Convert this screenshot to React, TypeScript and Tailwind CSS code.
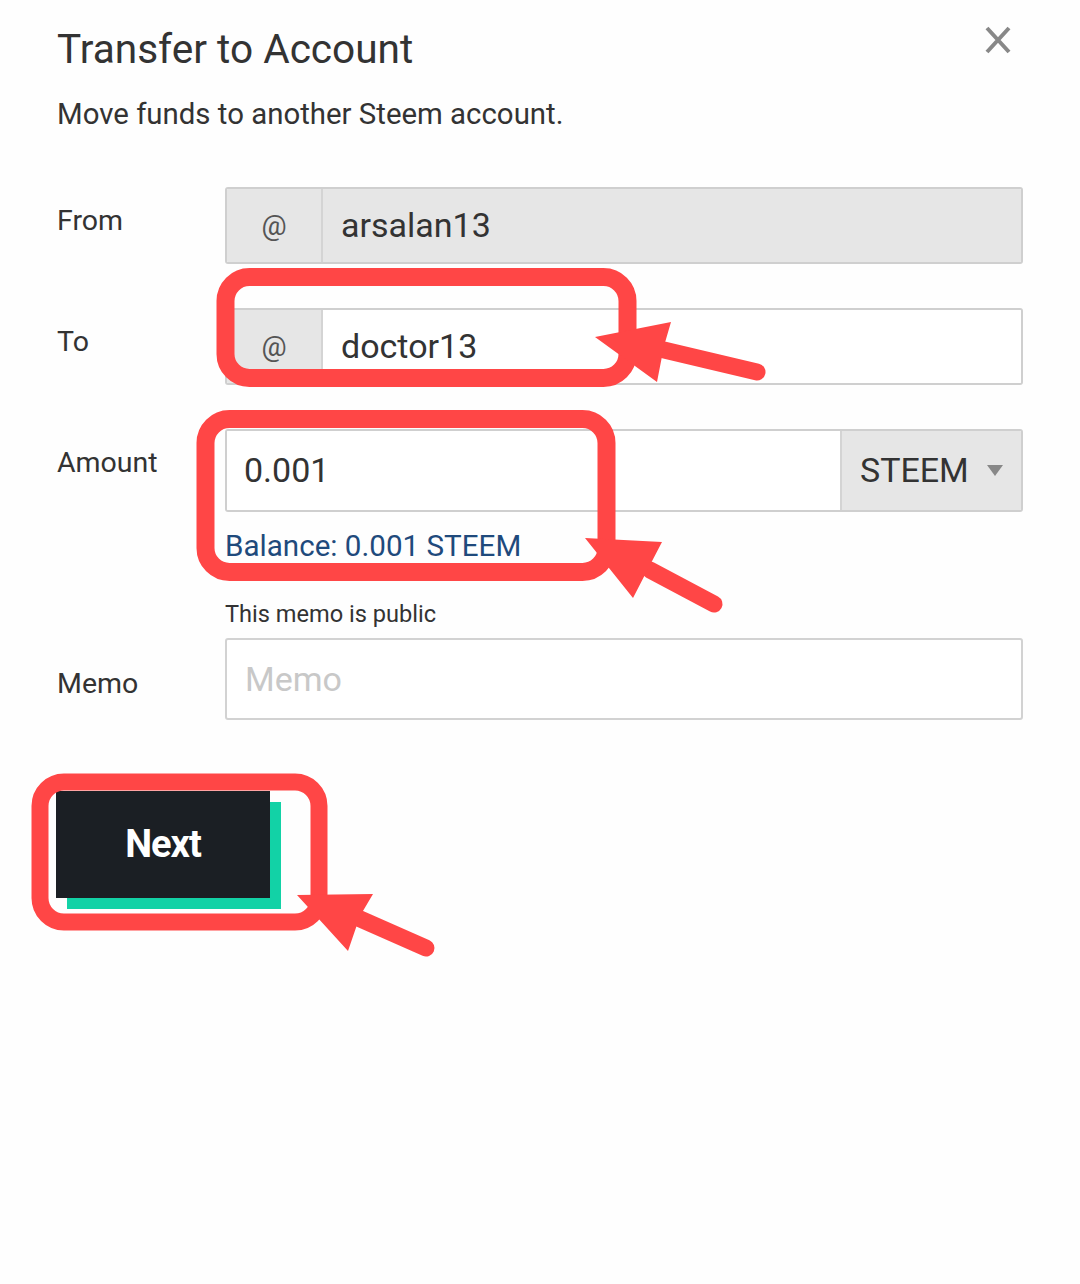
import React from 'react';

const RED = '#ff4646';

// Hand-drawn red callouts sitting on top of the form
const Callouts: React.FC = () => (
  <svg
    className="pointer-events-none absolute left-0 top-0"
    width={1080}
    height={1284}
    viewBox="0 0 1080 1284"
    fill="none"
  >
    <rect x={225.5} y={277} width={402} height={101} rx={24} stroke={RED} strokeWidth={18} />
    <line x1={664} y1={350} x2={757} y2={372} stroke={RED} strokeWidth={17} strokeLinecap="round" />
    <polygon points="595,337 671,322 664,346 657,382" fill={RED} />

    <rect x={205.5} y={419} width={401} height={153} rx={24} stroke={RED} strokeWidth={18} />
    <line x1={650} y1={570} x2={714} y2={604} stroke={RED} strokeWidth={17} strokeLinecap="round" />
    <polygon points="585,538 662,542 650,565 633,598" fill={RED} />

    <rect x={40} y={782} width={279} height={140} rx={24} stroke={RED} strokeWidth={17} />
    <line x1={358} y1={918} x2={426} y2={948} stroke={RED} strokeWidth={17} strokeLinecap="round" />
    <polygon points="297,895 373,894 360,916 348,951" fill={RED} />
  </svg>
);

const Label: React.FC<{ children: React.ReactNode; className?: string }> = ({ children, className }) => (
  <div className={`w-[168px] shrink-0 text-[28.5px] leading-[34px] text-[#333] ${className ?? ''}`}>{children}</div>
);

const AccountInput: React.FC<{ value: string; disabled?: boolean }> = ({ value, disabled }) => (
  <div className="flex h-[77px] flex-1 overflow-hidden rounded-[3px] border-2 border-[#cfcfcf]">
    <div className="flex w-[96px] shrink-0 items-center justify-center border-r-2 border-[#d4d4d4] bg-[#e6e6e6] text-[28px] text-[#555]">
      @
    </div>
    <div
      className={`flex flex-1 items-center pl-[18px] text-[34px] text-[#333] ${disabled ? 'bg-[#e6e6e6]' : 'bg-white'}`}
    >
      {value}
    </div>
  </div>
);

export default function App() {
  return (
    <div className="relative h-[1284px] w-[1080px] overflow-hidden bg-[#fefefe] font-['Roboto',sans-serif]">
      <div className="px-[57px] pt-[25px]">
        <div className="flex items-start justify-between">
          <h1 className="text-[40.6px] leading-[48px] font-normal text-[#333]">Transfer to Account</h1>
          <button className="mr-[12px] mt-[1px] text-[#888]" aria-label="Close">
            <svg width={26} height={28} viewBox="0 0 26 28">
              <path d="M2 2 L24 26 M24 2 L2 26" stroke="currentColor" strokeWidth={4} />
            </svg>
          </button>
        </div>
        <p className="mt-[23px] text-[29.4px] leading-[36px] text-[#333]">Move funds to another Steem account.</p>

        <div className="mt-[55px]">
          <div className="flex">
            <Label className="pt-[17px]">From</Label>
            <AccountInput value="arsalan13" disabled />
          </div>

          <div className="mt-[44px] flex">
            <Label className="pt-[17px]">To</Label>
            <AccountInput value="doctor13" />
          </div>

          <div className="mt-[44px] flex">
            <Label className="pt-[17px]">Amount</Label>
            <div className="flex-1">
              <div className="flex h-[83px] overflow-hidden rounded-[3px] border-2 border-[#cfcfcf]">
                <div className="flex flex-1 items-center bg-white pl-[17px] text-[34px] text-[#333]">0.001</div>
                <div className="flex w-[181px] shrink-0 items-center justify-between border-l-2 border-[#d4d4d4] bg-[#e6e6e6] pl-[18px] pr-[18px] text-[34px] text-[#333]">
                  <span>STEEM</span>
                  <svg width={16} height={11} viewBox="0 0 16 11">
                    <path d="M0 0 H16 L8 11 Z" fill="#888" />
                  </svg>
                </div>
              </div>
              <div className="mt-[16px] text-[29.6px] leading-[36px] text-[#1f4a7c]">Balance: 0.001 STEEM</div>
            </div>
          </div>

          <div className="mt-[35px] flex">
            <Label className="pt-[68px]">Memo</Label>
            <div className="flex-1">
              <div className="text-[23.6px] leading-[30px] text-[#333]">This memo is public</div>
              <div className="mt-[9px] flex h-[82px] items-center rounded-[3px] border-2 border-[#d2d2d2] bg-white pl-[18px] text-[34px] text-[#c8c8c8]">
                Memo
              </div>
            </div>
          </div>
        </div>

        <button className="-ml-px mt-[71px] flex h-[107px] w-[214px] items-center justify-center bg-[#1b1f24] text-[38px] font-bold tracking-[-1px] text-white shadow-[11px_11px_0_#12d2a6]">
          Next
        </button>
      </div>

      <Callouts />
    </div>
  );
}
